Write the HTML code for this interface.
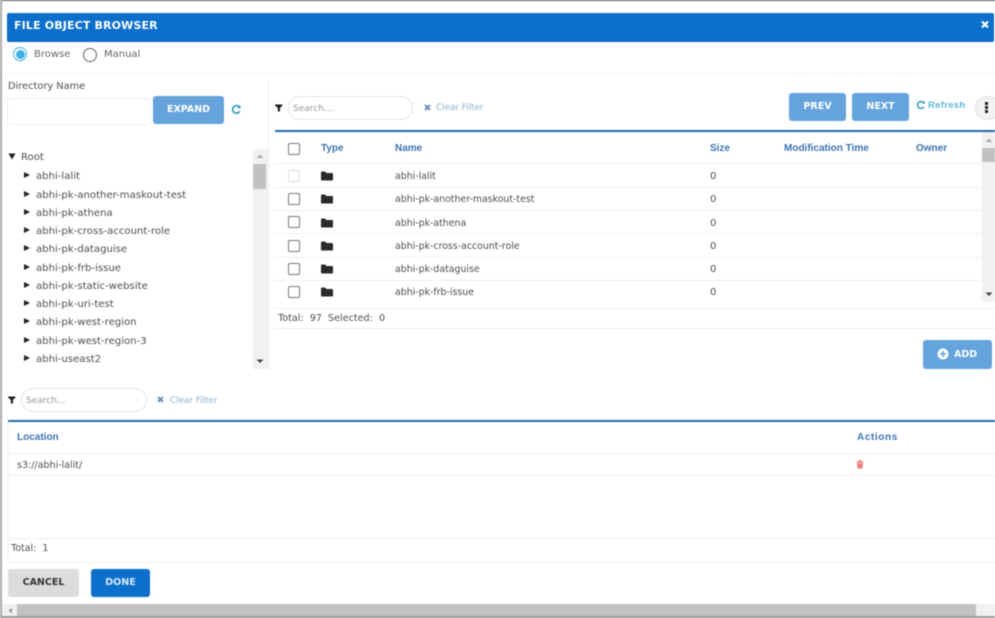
<!DOCTYPE html>
<html><head><meta charset="utf-8"><style>
html,body{margin:0;padding:0;background:#fff}
#p{position:relative;width:995px;height:618px;overflow:hidden;background:#fff;font-family:"DejaVu Sans","Liberation Sans",sans-serif;font-size:10.1px;color:#4f4f4f;filter:blur(.4px)}
#p div,#p svg{position:absolute}
.t{white-space:nowrap;line-height:14px}
.h{color:#3d74b0;font-weight:bold;font-family:"Liberation Sans",sans-serif;font-size:10px}
.btn{background:#64a3dc;color:#fff;border-radius:3px;font-weight:bold;font-size:9.5px;text-align:center;font-family:"DejaVu Sans",sans-serif}
.ln{background:#eee;height:1px}
.cb{width:10px;height:10px;border:1.5px solid #777;border-radius:2px}
.tr{width:0;height:0;border-left:6px solid #222;border-top:3px solid transparent;border-bottom:3px solid transparent}
</style></head><body><div id="p">
<div style="left:0;top:0;width:995px;height:1px;background:#4c5257"></div>
<div style="left:0;top:0;width:2px;height:618px;background:#aaa"></div>
<div style="left:0;top:616px;width:995px;height:2px;background:#999"></div>

<div style="left:7px;top:13px;width:987px;height:29px;background:#0b6fcb;border-radius:2px"></div>
<div class="t" style="left:14px;top:19px;color:#fff;font-weight:bold;font-size:11px;letter-spacing:.15px">FILE OBJECT BROWSER</div>
<svg style="left:981px;top:20px" width="8" height="9" viewBox="0 0 8 9"><path d="M1 1.5L7 7.5M7 1.5L1 7.5" stroke="#fff" stroke-width="2.2"/></svg>

<div style="left:13px;top:47px;width:12px;height:12px;border:1.5px solid #3fb0e8;border-radius:50%"></div>
<div style="left:16px;top:50px;width:9px;height:9px;background:#3fb0e8;border-radius:50%"></div>
<div class="t" style="left:34px;top:48px;color:#666;font-size:10px">Browse</div>
<div style="left:83px;top:48px;width:12px;height:12px;border:1.5px solid #666;border-radius:50%"></div>
<div class="t" style="left:104px;top:48px;color:#666;font-size:10px">Manual</div>
<div class="ln" style="left:7px;top:73px;width:988px"></div>
<div style="left:268px;top:80px;width:1px;height:290px;background:#eee"></div>

<div class="t" style="left:8px;top:80px;font-size:9.8px">Directory Name</div>
<div style="left:7px;top:98px;width:142px;height:25px;border:1px solid #eee;border-radius:3px"></div>
<div class="btn" style="left:153px;top:96px;width:71px;height:28px;line-height:28px">EXPAND</div>
<svg style="left:231px;top:104px" width="11" height="11" viewBox="0 0 11 11"><path d="M8.8 7.2A3.8 3.8 0 1 1 8.6 3.3" fill="none" stroke="#35a0c0" stroke-width="1.7"/><path d="M9.5 1v3.4H6.1z" fill="#35a0c0"/></svg>

<div style="left:253px;top:149px;width:15px;height:220px;background:#f1f1f1"></div>
<div style="left:253px;top:164px;width:13px;height:25px;background:#c1c1c1"></div>
<svg style="left:256px;top:154px" width="8" height="5"><path d="M0.5 4L4 0.5L7.5 4z" fill="#aaa"/></svg>
<svg style="left:256px;top:359px" width="8" height="5"><path d="M0.5 0.5H7.5L4 4z" fill="#444"/></svg>
<svg style="left:8px;top:153px" width="8" height="7"><path d="M0.5 0.5H7.5L4 6.5z" fill="#222"/></svg>
<div class="t" style="left:21px;top:151px">Root</div>
<div class="tr" style="left:24px;top:172px"></div><div class="t" style="left:36px;top:170px">abhi-lalit</div>
<div class="tr" style="left:24px;top:191px"></div><div class="t" style="left:36px;top:189px">abhi-pk-another-maskout-test</div>
<div class="tr" style="left:24px;top:209px"></div><div class="t" style="left:36px;top:207px">abhi-pk-athena</div>
<div class="tr" style="left:24px;top:227px"></div><div class="t" style="left:36px;top:225px">abhi-pk-cross-account-role</div>
<div class="tr" style="left:24px;top:245px"></div><div class="t" style="left:36px;top:243px">abhi-pk-dataguise</div>
<div class="tr" style="left:24px;top:264px"></div><div class="t" style="left:36px;top:262px">abhi-pk-frb-issue</div>
<div class="tr" style="left:24px;top:282px"></div><div class="t" style="left:36px;top:280px">abhi-pk-static-website</div>
<div class="tr" style="left:24px;top:300px"></div><div class="t" style="left:36px;top:298px">abhi-pk-uri-test</div>
<div class="tr" style="left:24px;top:318px"></div><div class="t" style="left:36px;top:316px">abhi-pk-west-region</div>
<div class="tr" style="left:24px;top:337px"></div><div class="t" style="left:36px;top:335px">abhi-pk-west-region-3</div>
<div class="tr" style="left:24px;top:355px"></div><div class="t" style="left:36px;top:353px">abhi-useast2</div>

<svg style="left:275px;top:104px" width="8" height="8"><path d="M0 0.5H7.5V1.5L5 4V7.5H2.8V4L0 1.5z" fill="#222"/></svg>
<div style="left:288px;top:96px;width:123px;height:22px;border:1px solid #e6e6e6;border-radius:12px"></div>
<div class="t" style="left:293px;top:102px;color:#999;font-size:9px">Search...</div>
<svg style="left:424px;top:104px" width="7" height="7"><path d="M1 1L6 6M6 1L1 6" stroke="#5a86b8" stroke-width="1.8"/></svg>
<div class="t" style="left:436px;top:101px;color:#8fb3d2;font-size:8.8px">Clear Filter</div>

<div class="btn" style="left:789px;top:93px;width:57px;height:28px;line-height:28px">PREV</div>
<div class="btn" style="left:852px;top:93px;width:57px;height:28px;line-height:28px">NEXT</div>
<svg style="left:916px;top:100px" width="10" height="10" viewBox="0 0 10 10"><path d="M8 6.8A3.5 3.5 0 1 1 7.8 2.8" fill="none" stroke="#3a9cc4" stroke-width="1.5"/><path d="M8.8 .6v3.2H5.6z" fill="#3a9cc4"/></svg>
<div class="t" style="left:928px;top:99px;color:#5cb8d6;font-size:9.5px;font-weight:bold;font-family:'Liberation Sans',sans-serif;letter-spacing:.3px">Refresh</div>
<div style="left:975px;top:96px;width:24px;height:22px;background:#f3f3f3;border:1px solid #ddd;border-radius:50%"></div>
<div style="left:985px;top:102px;width:3px;height:3px;background:#222"></div>
<div style="left:985px;top:106px;width:3px;height:3px;background:#222"></div>
<div style="left:985px;top:110px;width:3px;height:3px;background:#222"></div>

<div style="left:275px;top:130px;width:720px;height:2px;background:#1f6cab"></div>
<div class="cb" style="left:288px;top:143px"></div>
<div class="t h" style="left:321px;top:142px">Type</div>
<div class="t h" style="left:395px;top:142px">Name</div>
<div class="t h" style="left:710px;top:142px">Size</div>
<div class="t h" style="left:784px;top:142px">Modification Time</div>
<div class="t h" style="left:916px;top:142px">Owner</div>

<div style="left:982px;top:132px;width:13px;height:170px;background:#f1f1f1"></div>
<div style="left:982px;top:148px;width:13px;height:14px;background:#c1c1c1"></div>
<svg style="left:985px;top:138px" width="8" height="5"><path d="M0.5 4L4 0.5L7.5 4z" fill="#aaa"/></svg>
<svg style="left:985px;top:292px" width="8" height="5"><path d="M0.5 0.5H7.5L4 4z" fill="#444"/></svg>

<div class="ln" style="left:275px;top:163px;width:707px"></div>
<div class="ln" style="left:275px;top:187px;width:707px"></div>
<div class="ln" style="left:275px;top:210px;width:707px"></div>
<div class="ln" style="left:275px;top:233px;width:707px"></div>
<div class="ln" style="left:275px;top:257px;width:707px"></div>
<div class="ln" style="left:275px;top:280px;width:707px"></div>
<div class="ln" style="left:275px;top:308px;width:720px"></div>
<div class="ln" style="left:275px;top:328px;width:720px"></div>

<div class="cb" style="left:288px;top:170px;border-color:#ddd"></div>
<div class="cb" style="left:288px;top:193px"></div>
<div class="cb" style="left:288px;top:216px"></div>
<div class="cb" style="left:288px;top:240px"></div>
<div class="cb" style="left:288px;top:263px"></div>
<div class="cb" style="left:288px;top:286px"></div>

<svg style="left:321px;top:171px" width="12" height="10"><path d="M0 1.5Q0 .5 1 .5H4L5.5 2H11Q12 2 12 3V8.5Q12 9.5 11 9.5H1Q0 9.5 0 8.5z" fill="#2a2a2a"/></svg>
<svg style="left:321px;top:194px" width="12" height="10"><path d="M0 1.5Q0 .5 1 .5H4L5.5 2H11Q12 2 12 3V8.5Q12 9.5 11 9.5H1Q0 9.5 0 8.5z" fill="#2a2a2a"/></svg>
<svg style="left:321px;top:218px" width="12" height="10"><path d="M0 1.5Q0 .5 1 .5H4L5.5 2H11Q12 2 12 3V8.5Q12 9.5 11 9.5H1Q0 9.5 0 8.5z" fill="#2a2a2a"/></svg>
<svg style="left:321px;top:241px" width="12" height="10"><path d="M0 1.5Q0 .5 1 .5H4L5.5 2H11Q12 2 12 3V8.5Q12 9.5 11 9.5H1Q0 9.5 0 8.5z" fill="#2a2a2a"/></svg>
<svg style="left:321px;top:264px" width="12" height="10"><path d="M0 1.5Q0 .5 1 .5H4L5.5 2H11Q12 2 12 3V8.5Q12 9.5 11 9.5H1Q0 9.5 0 8.5z" fill="#2a2a2a"/></svg>
<svg style="left:321px;top:287px" width="12" height="10"><path d="M0 1.5Q0 .5 1 .5H4L5.5 2H11Q12 2 12 3V8.5Q12 9.5 11 9.5H1Q0 9.5 0 8.5z" fill="#2a2a2a"/></svg>

<div class="t" style="left:395px;top:170px;font-size:9.4px">abhi-lalit</div><div class="t" style="left:710px;top:170px">0</div>
<div class="t" style="left:395px;top:193px;font-size:9.4px">abhi-pk-another-maskout-test</div><div class="t" style="left:710px;top:193px">0</div>
<div class="t" style="left:395px;top:217px;font-size:9.4px">abhi-pk-athena</div><div class="t" style="left:710px;top:217px">0</div>
<div class="t" style="left:395px;top:240px;font-size:9.4px">abhi-pk-cross-account-role</div><div class="t" style="left:710px;top:240px">0</div>
<div class="t" style="left:395px;top:263px;font-size:9.4px">abhi-pk-dataguise</div><div class="t" style="left:710px;top:263px">0</div>
<div class="t" style="left:395px;top:286px;font-size:9.4px">abhi-pk-frb-issue</div><div class="t" style="left:710px;top:286px">0</div>
<div class="t" style="left:278px;top:312px;font-size:9.6px">Total:&nbsp; 97&nbsp; Selected:&nbsp; 0</div>

<div class="btn" style="left:923px;top:340px;width:69px;height:29px;line-height:28px"></div>
<svg style="left:937px;top:348px" width="12" height="12"><circle cx="6" cy="6" r="5.5" fill="#fff"/><path d="M6 3V9M3 6H9" stroke="#64a3dc" stroke-width="1.6"/></svg>
<div class="t" style="left:954px;top:348px;color:#fff;font-weight:bold;font-size:9.5px">ADD</div>

<svg style="left:8px;top:396px" width="8" height="8"><path d="M0 0.5H7.5V1.5L5 4V7.5H2.8V4L0 1.5z" fill="#222"/></svg>
<div style="left:21px;top:388px;width:124px;height:22px;border:1px solid #e6e6e6;border-radius:12px"></div>
<div class="t" style="left:26px;top:394px;color:#999;font-size:9px">Search...</div>
<svg style="left:157px;top:396px" width="7" height="7"><path d="M1 1L6 6M6 1L1 6" stroke="#5a86b8" stroke-width="1.8"/></svg>
<div class="t" style="left:170px;top:394px;color:#8fb3d2;font-size:8.8px">Clear Filter</div>

<div style="left:8px;top:420px;width:987px;height:2px;background:#1f6cab"></div>
<div style="left:8px;top:422px;width:1px;height:140px;background:#f2f2f2"></div>
<div class="t h" style="left:17px;top:431px">Location</div>
<div class="t h" style="left:857px;top:431px;letter-spacing:.6px">Actions</div>
<div class="ln" style="left:8px;top:453px;width:987px"></div>
<div class="ln" style="left:8px;top:475px;width:987px"></div>
<div class="t" style="left:17px;top:459px;font-size:9.5px">s3://abhi-lalit/</div>
<svg style="left:856px;top:460px" width="8" height="9"><path d="M0 1.5H8V2.5H0zM2.5 .3H5.5V1.5H2.5zM1 3H7L6.5 8.5H1.5z" fill="#ee8080"/></svg>
<div class="ln" style="left:8px;top:538px;width:987px"></div>
<div class="ln" style="left:8px;top:562px;width:987px"></div>
<div class="t" style="left:11px;top:542px;font-size:9.5px">Total:&nbsp; 1</div>

<div class="btn" style="left:8px;top:569px;width:71px;height:28px;line-height:27px;background:#dcdcdc;color:#333">CANCEL</div>
<div class="btn" style="left:91px;top:569px;width:59px;height:28px;line-height:27px;background:#0b6fcb;color:#d5e8f8">DONE</div>

<div style="left:2px;top:604px;width:993px;height:12px;background:#f1f1f1"></div>
<div style="left:17px;top:604px;width:959px;height:12px;background:#c1c1c1"></div>
<svg style="left:8px;top:607px" width="5" height="7"><path d="M4 .5V6.5L.5 3.5z" fill="#999"/></svg>
</div></body></html>
